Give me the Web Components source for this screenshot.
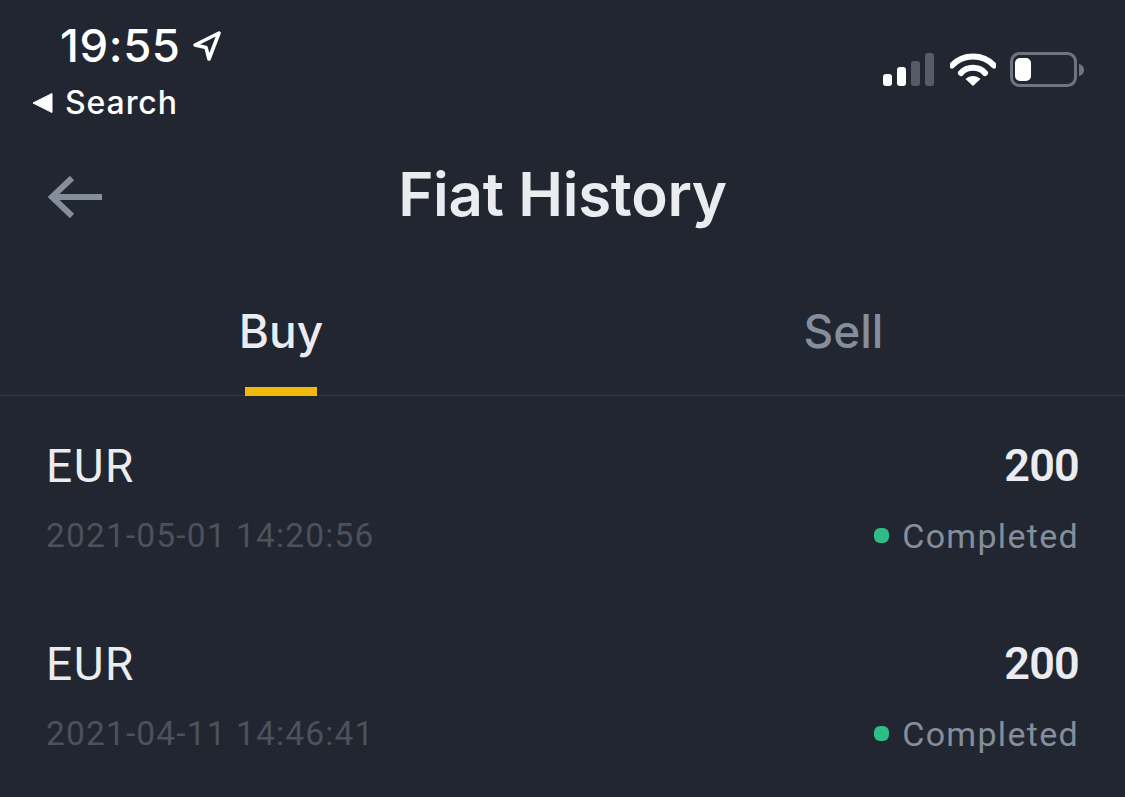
<!DOCTYPE html>
<html><head><meta charset="utf-8"><title>Fiat History</title>
<style>html,body{margin:0;padding:0;background:#212631}body{width:1125px;height:797px;overflow:hidden;font-family:Inter,"Liberation Sans",sans-serif}</style>
</head><body>
<status-bar></status-bar>
<nav-header>Fiat History</nav-header>
<tab-bar></tab-bar>
<history-row currency="EUR" amount="200" date="2021-05-01 14:20:56" status="Completed"></history-row>
<history-row currency="EUR" amount="200" date="2021-04-11 14:46:41" status="Completed"></history-row>
<script>
class Base extends HTMLElement{
  render(h){this.attachShadow({mode:'open'}).innerHTML=h}
}
customElements.define('status-bar',class extends Base{connectedCallback(){this.render(`<style>
:host{display:flex;justify-content:space-between;height:130px;box-sizing:border-box;padding:0 41px 0 32px;color:#fff}
.left{display:flex;flex-direction:column;padding-top:21px}
.time{display:flex;align-items:center;margin-left:28px;height:50px;font:500 45.500px/50px Inter,sans-serif;letter-spacing:.6px}
.time svg{margin-left:11px;margin-top:-1px}
.back{display:flex;align-items:center;margin-top:17px;height:30px;font:500 32px/30px Inter,sans-serif;letter-spacing:.9px}
.back svg{margin-right:12px}
.right{display:flex;align-items:center;height:72px;margin-top:34px;gap:0}
.right svg{display:block}
</style>
<div class="left"><div class="time">19:55<svg width="30" height="32" viewBox="0 0 30 32"><path d="M27 3 3 15l11 2.500L17 29z" fill="none" stroke="#fff" stroke-width="3.600" stroke-linejoin="round"/></svg></div>
<div class="back"><svg width="21" height="22" viewBox="0 0 21 22"><path d="M20 1.500V20.500L1 11z" fill="#fff" stroke="#fff" stroke-linejoin="round"/></svg><span>Search</span></div></div>
<div class="right"><svg width="52" height="34" viewBox="0 0 52 34"><rect x="0" y="21" width="9" height="12" rx="3" fill="#fff"/><rect x="14" y="14" width="9" height="19" rx="3" fill="#fff"/><rect x="28" y="8" width="9" height="25" rx="3" fill="#565b66"/><rect x="42" y="0" width="9" height="33" rx="3" fill="#565b66"/></svg>
<svg style="margin-left:15px" width="46" height="34" viewBox="0 0 46 34"><path d="M2 12.500C13 .5 33 .5 44 12.500" fill="none" stroke="#fff" stroke-width="6" stroke-linecap="round"/><path d="M11 20C17 13 29 13 35 20" fill="none" stroke="#fff" stroke-width="6" stroke-linecap="round"/><path d="M15.500 26C20 22 26 22 30.500 26L23 33z" fill="#fff"/></svg>
<svg style="margin-left:14px" width="74" height="36" viewBox="0 0 74 36"><rect x="1.500" y="1.500" width="64" height="32" rx="8" fill="none" stroke="#6f7480" stroke-width="3"/><rect x="5" y="6" width="16" height="23" rx="5" fill="#fff"/><path d="M69 12c4 1 5 4 5 6s-1 5-5 6z" fill="#6f7480"/></svg></div>`)}});
customElements.define('nav-header',class extends Base{connectedCallback(){this.render(`<style>
:host{display:flex;align-items:center;justify-content:center;position:relative;height:128px;font:600 60px/1 Inter,sans-serif;color:#eaecef}
svg{position:absolute;left:46px;top:43px}
span{letter-spacing:-.3px}
</style><svg width="60" height="48" viewBox="0 0 60 48"><path d="M56 24H6M26 5 6 24l20 19" fill="none" stroke="#848e9c" stroke-width="6"/></svg><span><slot></slot></span>`)}});
customElements.define('tab-bar',class extends Base{connectedCallback(){this.render(`<style>
:host{display:grid;grid-template-columns:562px 1fr;height:138px;box-sizing:border-box;border-bottom:1px solid #353a45;font:500 46px/1 Inter,sans-serif}
div{display:flex;justify-content:center;padding-top:50px;position:relative;color:#848e9c}
.on{color:#eaecef}
.on::after{content:"";position:absolute;left:245px;width:72px;height:9px;bottom:-1px;background:#f0b90b}
</style><div class="on">Buy</div><div>Sell</div>`)}});
customElements.define('history-row',class extends Base{connectedCallback(){const a=n=>this.getAttribute(n);this.render(`<style>
:host{display:grid;grid-template-columns:1fr auto;height:198px;box-sizing:border-box;padding:45px 46px 0 46px;align-content:start;row-gap:0}
.cur{font:400 46px/50px Roboto,sans-serif;color:#eaecef;letter-spacing:1.5px}
.amt{font:600 45px/50px Roboto,sans-serif;color:#eaecef;text-align:right;letter-spacing:-.8px}
.date{font:400 33.500px/40px Roboto,sans-serif;color:#4b515d;margin-top:25px;letter-spacing:1.15px}
.st{display:flex;align-items:center;justify-content:flex-end;font:400 34px/40px Roboto,sans-serif;color:#848e9c;margin-top:25px;letter-spacing:1.3px}
i{width:15px;height:15px;border-radius:6px;background:#2ebd85;margin-right:13px;margin-top:-2px}
</style><div class="cur">${a('currency')}</div><div class="amt">${a('amount')}</div><div class="date">${a('date')}</div><div class="st"><i></i>${a('status')}</div>`)}});
</script></body></html>
